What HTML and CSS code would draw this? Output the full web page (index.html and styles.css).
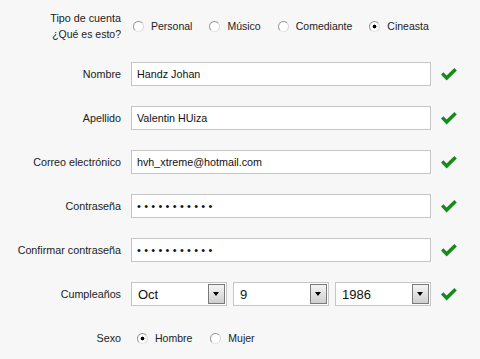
FILE: index.html
```html
<!doctype html>
<html lang="es">
  <head>
    <meta charset="UTF-8" />
    <meta name="viewport" content="width=device-width, initial-scale=1.0" />
    <title>Registro</title>
    <link rel="stylesheet" href="styles.css">
  </head>
  <body>
    <form class="signup" id="signupForm">
      <div class="row row-type">
        <div class="label label-two">
          <span>Tipo de cuenta</span>
          <a class="help">¿Qué es esto?</a>
        </div>
        <div class="options">
          <label class="option"><input type="radio" name="tipo" value="personal" /> Personal</label>
          <label class="option"><input type="radio" name="tipo" value="musico" /> Músico</label>
          <label class="option"><input type="radio" name="tipo" value="comediante" /> Comediante</label>
          <label class="option"><input type="radio" name="tipo" value="cineasta" checked /> Cineasta</label>
        </div>
      </div>

      <div class="row">
        <label class="label" for="nombre">Nombre</label>
        <input class="field" type="text" id="nombre" value="Handz Johan" />
        <span class="check"><svg viewBox="0 0 16 13"><path d="M0 6.6 L2.4 4.3 L5.6 7.6 L13.4 0 L15.8 2.4 L5.6 12.6 Z" /></svg></span>
      </div>

      <div class="row">
        <label class="label" for="apellido">Apellido</label>
        <input class="field" type="text" id="apellido" value="Valentin HUiza" />
        <span class="check"><svg viewBox="0 0 16 13"><path d="M0 6.6 L2.4 4.3 L5.6 7.6 L13.4 0 L15.8 2.4 L5.6 12.6 Z" /></svg></span>
      </div>

      <div class="row">
        <label class="label" for="correo">Correo electrónico</label>
        <input class="field" type="email" id="correo" value="hvh_xtreme@hotmail.com" />
        <span class="check"><svg viewBox="0 0 16 13"><path d="M0 6.6 L2.4 4.3 L5.6 7.6 L13.4 0 L15.8 2.4 L5.6 12.6 Z" /></svg></span>
      </div>

      <div class="row">
        <label class="label" for="pass">Contraseña</label>
        <input class="field field-pass" type="password" id="pass" value="xxxxxxxxxxx" />
        <span class="check"><svg viewBox="0 0 16 13"><path d="M0 6.6 L2.4 4.3 L5.6 7.6 L13.4 0 L15.8 2.4 L5.6 12.6 Z" /></svg></span>
      </div>

      <div class="row">
        <label class="label" for="pass2">Confirmar contraseña</label>
        <input class="field field-pass" type="password" id="pass2" value="xxxxxxxxxxx" />
        <span class="check"><svg viewBox="0 0 16 13"><path d="M0 6.6 L2.4 4.3 L5.6 7.6 L13.4 0 L15.8 2.4 L5.6 12.6 Z" /></svg></span>
      </div>

      <div class="row">
        <label class="label" for="mes">Cumpleaños</label>
        <div class="dates">
          <div class="select">
            <select id="mes">
              <option>Oct</option>
            </select>
            <span class="arrow"></span>
          </div>
          <div class="select">
            <select id="dia">
              <option>9</option>
            </select>
            <span class="arrow"></span>
          </div>
          <div class="select">
            <select id="anio">
              <option>1986</option>
            </select>
            <span class="arrow"></span>
          </div>
        </div>
        <span class="check"><svg viewBox="0 0 16 13"><path d="M0 6.6 L2.4 4.3 L5.6 7.6 L13.4 0 L15.8 2.4 L5.6 12.6 Z" /></svg></span>
      </div>

      <div class="row">
        <div class="label">Sexo</div>
        <div class="options options-sex">
          <label class="option"><input type="radio" name="sexo" value="h" checked /> Hombre</label>
          <label class="option"><input type="radio" name="sexo" value="m" /> Mujer</label>
        </div>
      </div>
    </form>
  </body>
</html>
```

FILE: styles.css
```css
body {
  margin: 0;
  background-color: #f7f7f7;
  font-family: "Liberation Sans", Arial, sans-serif;
  font-size: 10.75px;
  color: #222;
}
.signup {
  display: flex;
  flex-direction: column;
  gap: 20px;
  padding-top: 10px;
}
.row {
  display: grid;
  grid-template-columns: 121px 300px 24px;
  column-gap: 10px;
  align-items: center;
  height: 24px;
}
.row-type {
  height: 32px;
}
.label {
  text-align: right;
}
.label-two {
  display: flex;
  flex-direction: column;
  align-items: flex-end;
  line-height: 16px;
}
.help {
  color: #222;
  font-size: 10.5px;
}
.options {
  display: flex;
  align-items: center;
  gap: 17px;
  padding-left: 2px;
  font-size: 10.5px;
}
.options-sex {
  padding-left: 6px;
  gap: 18px;
}
.option {
  display: flex;
  align-items: center;
  gap: 7px;
}
.option input {
  appearance: none;
  -webkit-appearance: none;
  margin: 0;
  width: 11px;
  height: 11px;
  border: 1px solid;
  border-color: #8f8f8f #d8d8d8 #e4e4e4 #9a9a9a;
  border-radius: 50%;
  background-color: #fff;
}
.option input:checked {
  background: radial-gradient(circle, #000 0, #000 1.6px, #fff 2.2px);
}
.field {
  box-sizing: border-box;
  width: 300px;
  height: 24px;
  margin: 0;
  padding: 0 5px;
  border: 1px solid #c6c6c6;
  background-color: #fff;
  font-family: "Liberation Sans", Arial, sans-serif;
  font-size: 10.75px;
  color: #111;
  outline: none;
}
.field-pass {
  letter-spacing: 3.3px;
  font-size: 11px;
}
.check {
  display: flex;
  align-items: center;
}
.check svg {
  width: 16px;
  height: 13px;
  fill: #178a1b;
}
.dates {
  display: grid;
  grid-template-columns: 1fr 1fr 1fr;
  gap: 6px;
}
.select {
  position: relative;
  height: 24px;
}
.select select {
  appearance: none;
  -webkit-appearance: none;
  box-sizing: border-box;
  width: 100%;
  height: 24px;
  margin: 0;
  padding: 0 0 0 6px;
  border: 1px solid #c6c6c6;
  border-radius: 0;
  background-color: #fff;
  font-family: "Liberation Sans", Arial, sans-serif;
  font-size: 13px;
  color: #111;
}
.arrow {
  position: absolute;
  top: 2px;
  right: 2px;
  box-sizing: border-box;
  width: 17px;
  height: 20px;
  border: 1px solid #7a7a7a;
  background: linear-gradient(#f4f4f4, #cfcfcf);
  pointer-events: none;
}
.arrow::after {
  content: "";
  position: absolute;
  left: 4px;
  top: 7px;
  border-left: 3.5px solid transparent;
  border-right: 3.5px solid transparent;
  border-top: 4px solid #000;
}
```
